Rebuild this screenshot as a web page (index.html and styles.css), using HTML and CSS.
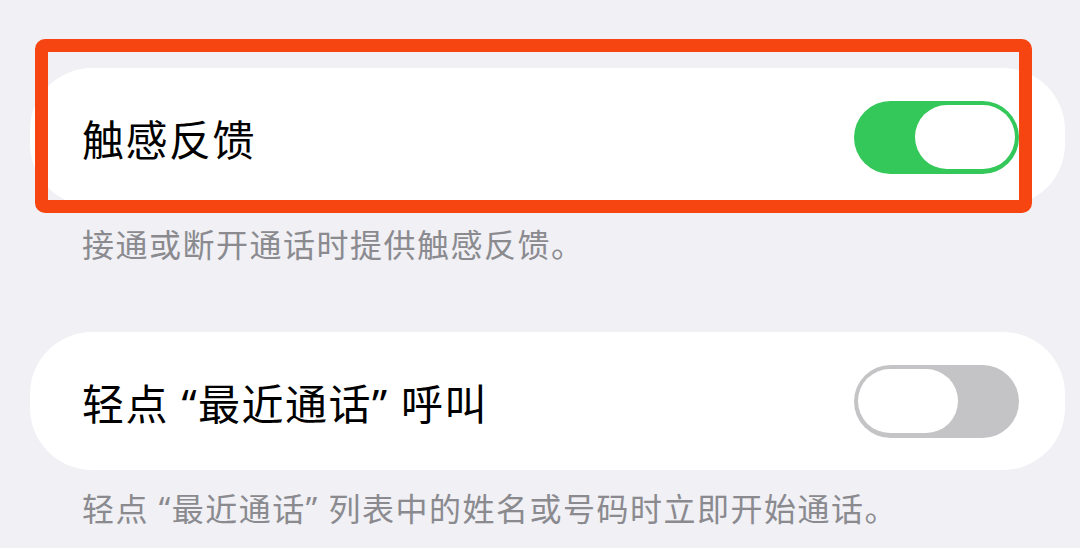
FILE: index.html
```html
<!DOCTYPE html>
<html lang="zh-CN">
<head>
    <meta charset="UTF-8">
    <meta name="viewport" content="width=device-width, initial-scale=1.0">
    <title>触感反馈</title>
    <link rel="stylesheet" href="styles.css">
</head>
<body>

    <div class="settings">
        <div class="group first">
            <div class="card">
                <span class="label">触感反馈</span>
                <span class="toggle on"><span class="knob"></span></span>
                <div class="highlight"></div>
            </div>
            <p class="note">接通或断开通话时提供触感反馈。</p>
        </div>

        <div class="group">
            <div class="card">
                <span class="label">轻点 “最近通话” 呼叫</span>
                <span class="toggle"><span class="knob"></span></span>
            </div>
            <p class="note">轻点 “最近通话” 列表中的姓名或号码时立即开始通话。</p>
        </div>
    </div>

</body>
</html>
```

FILE: styles.css
```css
body {
    margin: 0;
    background-color: #f0f0f5;
    font-family: "Noto Sans", "Noto Sans CJK SC", sans-serif;
    overflow: hidden;
}
.settings {
    padding: 68px 15px 0 30px;
}
.group.first {
    margin-bottom: 66px;
}
.card {
    position: relative;
    display: flex;
    align-items: center;
    justify-content: space-between;
    height: 138px;
    padding: 0 46px 0 52px;
    background-color: #fff;
    border-radius: 62px;
}
.label {
    font-size: 42px;
    color: #000;
    letter-spacing: 1.5px;
}
.note {
    margin: 18px 0 0 52px;
    font-size: 32px;
    line-height: 42px;
    color: #8a8a8f;
    letter-spacing: 1.5px;
}
.toggle {
    display: flex;
    align-items: center;
    justify-content: flex-start;
    width: 165px;
    height: 73px;
    padding: 0 4px;
    box-sizing: border-box;
    border-radius: 37px;
    background-color: #c4c4c6;
}
.toggle.on {
    justify-content: flex-end;
    background-color: #34c759;
}
.knob {
    width: 100px;
    height: 64px;
    border-radius: 32px;
    background-color: #fff;
}
.highlight {
    position: absolute;
    left: 5px;
    top: -29px;
    width: 997px;
    height: 174px;
    box-sizing: border-box;
    border: 13px solid #f64510;
    border-radius: 10px;
}
```
